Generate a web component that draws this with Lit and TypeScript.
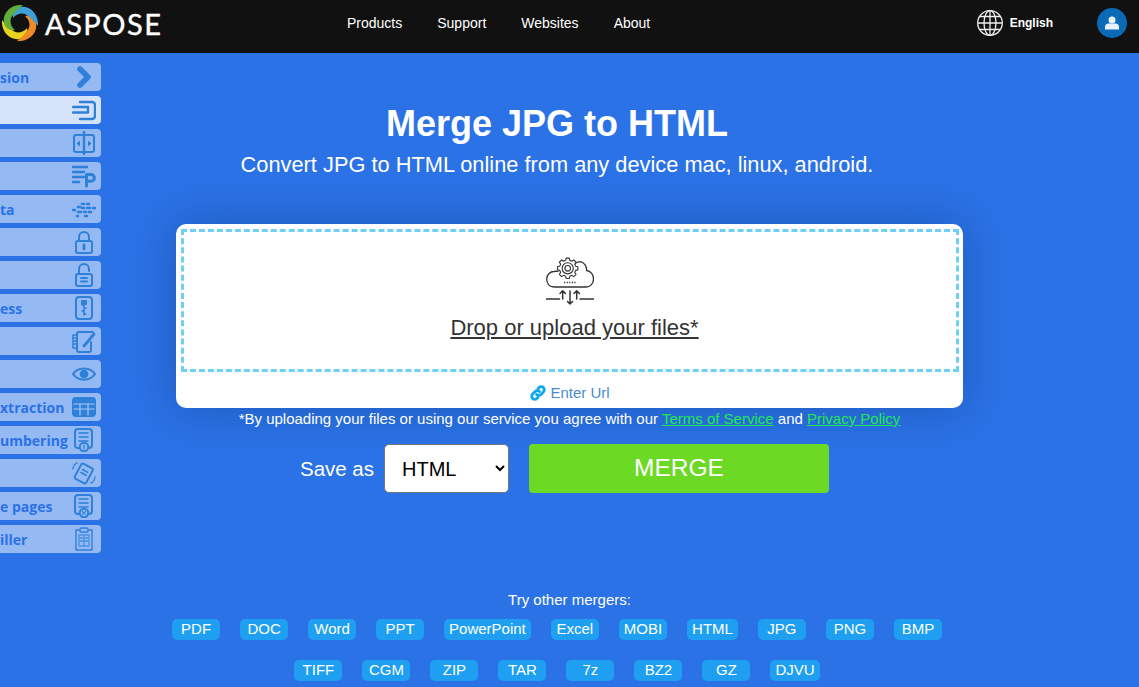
import { LitElement, html, css, svg } from "lit";
import { customElement } from "lit/decorators.js";

const sideItems: [string, any, boolean?][] = [
  ["sion", svg`<path d="M8 4l8 8-8 8" stroke-width="5.500"/>`],
  ["", svg`<path d="M8 4h12a3 3 0 0 1 3 3v11a3 3 0 0 1-3 3H8M1 9h15M1 14.500h15M16 9v5.500" stroke-width="2.400"/>`, true],
  ["", svg`<rect x="2" y="4" width="20" height="17" rx="2"/><path d="M12 1v22" stroke-width="2.400"/><path d="M8 9.500l-3.500 3 3.500 3zM16 9.500l3.500 3-3.500 3z" fill="currentColor" stroke="none"/>`],
  ["", svg`<path d="M1 3h14M1 8h11M1 13h11M1 18h6" stroke-width="2.600"/><path d="M14.500 22V10.500h4.500a3.400 3.400 0 0 1 0 6.800h-4.500" stroke-width="3"/>`],
  ["ta", svg`<path d="M1 13h2M6 10h2M6 15h3M10 7h2M10 11h2M12 15h2M15 7h2M15 11h3M17 15h2M21 11h2M5 19h1M13 19h2" stroke-width="2.600"/>`],
  ["", svg`<rect x="4" y="11" width="16" height="12" rx="2"/><path d="M7 11V7a5 5 0 0 1 10 0v4"/><path d="M12 15v4" stroke-width="2.800"/>`],
  ["", svg`<rect x="4" y="11" width="16" height="12" rx="2"/><path d="M7 11V6a5 5 0 0 1 10 0v2"/><path d="M9 15h6M9 18.500h6"/>`],
  ["ess", svg`<rect x="4" y="1" width="16" height="22" rx="3"/><path d="M12 6v13M10 9h2M12 12h2M10 15h2M12 18h2" stroke-width="1.600"/><rect x="10" y="5" width="4" height="3" fill="currentColor"/>`],
  ["", svg`<path d="M5 6H1v13h4M2 9h2M2 12h2M2 15h2" stroke-width="1.500"/><path d="M19 13v8a2 2 0 0 1-2 2H7a2 2 0 0 1-2-2V5a2 2 0 0 1 2-2h14"/><path d="M12 17l10-12" stroke-width="2.800"/>`],
  ["", svg`<path d="M1 12c5-7.500 17-7.500 22 0-5 7.500-17 7.500-22 0z"/><circle cx="12" cy="12" r="3.400" fill="currentColor"/>`],
  ["xtraction", svg`<rect x="1" y="3" width="22" height="18" rx="3" fill="currentColor"/><path d="M2 9h20M2 14h20M8 9v11M16 9v11" stroke="#a9c5f3" stroke-width="1.200"/>`],
  ["umbering", svg`<path d="M7 20H6a3 3 0 0 1-3-3V4a3 3 0 0 1 3-3h11a3 3 0 0 1 3 3v13a3 3 0 0 1-3 3h-1"/><path d="M7 5h9M7 9h9M7 13h9" stroke-width="1.500"/><circle cx="12" cy="19" r="4.300"/><path d="M12 17v4" stroke-width="1.300"/>`],
  ["", svg`<rect x="5.500" y="4" width="13" height="17" rx="2" transform="rotate(28 12 12)"/><path d="M10.500 8.500l5 2.800M9 11.500l5 2.800" stroke-width="1.600"/><path d="M1 8a7 7 0 0 1 4-6M19 22a7 7 0 0 0 4-6" stroke-width="1.400" stroke-dasharray="2 1.500"/>`],
  ["e pages", svg`<path d="M7 20H6a3 3 0 0 1-3-3V4a3 3 0 0 1 3-3h11a3 3 0 0 1 3 3v13a3 3 0 0 1-3 3h-1"/><path d="M7 5h9M7 9h9M7 13h9" stroke-width="1.500"/><circle cx="12" cy="19" r="4.300"/><path d="M10.300 17.300l3.400 3.400M13.700 17.300l-3.400 3.400" stroke-width="1.200"/>`],
  ["iller", svg`<path d="M7 3H4v20h16V3h-3" stroke-width="1.400"/><rect x="8" y="1" width="8" height="4" rx="1" stroke-width="1.400"/><path d="M7 8h10v11H7zM7 11h10M7 14h10M12 8v11" stroke-width="1.300" opacity=".7"/>`],
];

const row1 = ["PDF", "DOC", "Word", "PPT", "PowerPoint", "Excel", "MOBI", "HTML", "JPG", "PNG", "BMP"];
const row2 = ["TIFF", "CGM", "ZIP", "TAR", "7z", "BZ2", "GZ", "DJVU"];
const arm = "M3-18C-9-19-18-10-16 0-15 5-10 8-5 7-10 3-11-4-7-8-4-12-1-15 3-18Z";

function gearPath(cx: number, cy: number, rOut: number, rIn: number, teeth: number) {
  const pts: string[] = [];
  const step = (Math.PI * 2) / teeth;
  for (let i = 0; i < teeth; i++) {
    const a = i * step;
    [[-0.32, rIn], [-0.2, rOut], [0.2, rOut], [0.32, rIn]].forEach(([f, r]) => {
      const t = a + f * step;
      pts.push(`${(cx + r * Math.cos(t)).toFixed(2)} ${(cy + r * Math.sin(t)).toFixed(2)}`);
    });
  }
  return "M" + pts.join("L") + "Z";
}

@customElement("app-root")
export class AppRoot extends LitElement {
  static styles = css`
    :host { display: block; position: relative; height: 687px; overflow: hidden; background: #2a72e6; font-family: "Liberation Sans", Arial, sans-serif; color: #fff; }
    .header { height: 53px; box-sizing: border-box; padding-bottom: 7px; background: #111; display: flex; align-items: center; position: relative; }
    .logo { display: flex; align-items: center; margin-left: 2px; width: 345px; flex: none; }
    .logo-text { font-family: Lato, sans-serif; font-size: 29px; line-height: 1; margin-left: 7px; letter-spacing: 1.500px; color: #fff; -webkit-text-stroke: 0.4px #fff; }
    .nav { display: flex; gap: 35px; font-size: 14px; flex: 1; }
    .lang { display: flex; align-items: center; gap: 7px; font-size: 12px; font-weight: bold; margin-right: 44px; }
    .avatar { width: 30px; height: 30px; border-radius: 50%; background: #0a6ab5; display: flex; align-items: center; justify-content: center; margin-right: 12px; }
    .side { position: absolute; left: 0; top: 63px; width: 101px; display: flex; flex-direction: column; gap: 5px; }
    .item { height: 28px; border-radius: 0 4px 4px 0; background: rgba(255,255,255,.5); display: flex; align-items: center; justify-content: space-between; padding-right: 5px; color: #2a72e6; font: bold 14px "Open Sans", sans-serif; white-space: nowrap; }
    .item.on { background: rgba(255,255,255,.8); }
    .item svg { width: 24px; height: 24px; flex: none; fill: none; stroke: #2f80d8; stroke-width: 2; color: #2f80d8; stroke-linecap: round; stroke-linejoin: round; }
    .main { display: flex; flex-direction: column; align-items: center; }
    h1 { margin: 49px 25px 0 0; font-size: 36px; line-height: 43px; font-weight: bold; }
    .sub { margin: 7px 25px 0 0; font-size: 21.800px; line-height: 25px; }
    .card { margin-top: 47px; width: 787px; height: 184px; box-sizing: border-box; background: #fff; border-radius: 10px; box-shadow: 0 0 45px rgba(10,30,80,.3); padding: 5px 4px 0 5px; display: flex; flex-direction: column; align-items: stretch; }
    .drop { height: 143px; box-sizing: border-box; border: 3px dashed #6fd0f5; display: flex; flex-direction: column; align-items: center; padding-top: 25px; color: #333; }
    .drop span { font-size: 22px; line-height: 25px; text-decoration: underline; margin: 10px 0 0 9px; }
    .url { display: flex; align-items: center; justify-content: center; gap: 4px; color: #4a8bd0; font-size: 15px; margin-top: 12px; line-height: 17px; }
    .terms { font-size: 15px; line-height: 17px; margin-top: 2px; }
    .terms a { color: #22e84f; text-decoration: underline; }
    .save { display: flex; align-items: center; margin: 17px 10px 0 0; }
    .save label { font-size: 20.500px; margin-right: 10px; }
    select { width: 125px; height: 49px; box-sizing: border-box; font: 20px "Liberation Sans", Arial, sans-serif; padding-left: 13px; border: 1px solid #767676; border-radius: 5px; background: #fff; color: #000; }
    button { width: 300px; height: 49px; margin-left: 20px; border: 0; border-radius: 4px; background: #6cd924; color: #fff; font: 24.500px "Liberation Sans", Arial, sans-serif; padding: 0 0 2px; }
    .try { font-size: 15px; line-height: 17px; margin-top: 98px; }
    .tags { display: flex; justify-content: center; gap: 20px; margin: 0 25px 0 0; }
    .tags.a { margin-top: 11px; }
    .tags.b { margin-top: 20px; }
    .tag { min-width: 48px; height: 21px; box-sizing: border-box; padding: 0 5px; border-radius: 5px; background: #1e9ff2; font-size: 15px; line-height: 20px; text-align: center; }
  `;

  render() {
    return html`
      <div class="header">
        <div class="logo">
          <svg width="36" height="36" viewBox="-18 -18 36 36">
            <path d=${arm} fill="#e8d21f" transform="rotate(270)"/>
            <path d=${arm} fill="#f08a24" transform="rotate(180)"/>
            <path d=${arm} fill="#3f9ed8" transform="rotate(90)"/>
            <path d=${arm} fill="#5fae3c"/>
            <circle r="3.500" fill="#111"/>
          </svg>
          <span class="logo-text">ASPOSE</span>
        </div>
        <div class="nav"><span>Products</span><span>Support</span><span>Websites</span><span>About</span></div>
        <div class="lang">
          <svg width="26" height="26" viewBox="0 0 26 26" fill="none" stroke="#eee" stroke-width="1.300">
            <circle cx="13" cy="13" r="12.300"/><ellipse cx="13" cy="13" rx="6" ry="12.300"/>
            <path d="M13 1v24M1 13h24M3 6.500h20M3 19.500h20"/>
          </svg>
          <span>English</span>
        </div>
        <div class="avatar">
          <svg width="14" height="14" viewBox="0 0 14 14" fill="#e8f1f8"><circle cx="7" cy="4" r="3.500"/><path d="M0 13.500V11c0-2 1.500-3.500 3.500-3.500h7c2 0 3.500 1.500 3.500 3.500v2.500z"/></svg>
        </div>
      </div>

      <div class="side">
        ${sideItems.map(([t, icon, on]) => html`<div class="item ${on ? "on" : ""}"><span>${t}</span><svg viewBox="0 0 24 24">${icon}</svg></div>`)}
      </div>

      <div class="main">
        <h1>Merge JPG to HTML</h1>
        <div class="sub">Convert JPG to HTML online from any device mac, linux, android.</div>
        <div class="card">
          <div class="drop">
            <svg width="48" height="48" viewBox="0 0 48 48" fill="none" stroke="#333" stroke-width="1.300" stroke-linecap="round" stroke-linejoin="round">
              <path d="M12 14.500C10.500 14 9 14.300 8 14.500 4 14.500.7 18 .7 22 .7 26 3 30 9 30H40C44 30 47.500 27 47.500 22 47.500 18 45 14 40.500 13.500 41 9 38 5 34 4.700 32 4.700 30 5.500 29 7"/>
              <path d=${gearPath(21.7, 11.3, 10.3, 8.2, 8)} stroke-width="1.100" fill="#fff"/>
              <circle cx="21.700" cy="11.300" r="5.600" stroke-width="1.100"/><circle cx="21.700" cy="11.300" r="2.800" stroke-width="1.100"/>
              <path d="M18 25.500h12" stroke-width="1.300" stroke-dasharray="1.200 1.400" stroke-linecap="butt"/>
              <path d="M0 42H13.500M16.700 42V34M14 36.500l2.700-2.700 2.700 2.700M24 34V47M21.500 44.500l2.500 2.500 2.500-2.500M30.700 42V34M28 36.500l2.700-2.700 2.700 2.700M34 42H48" stroke-width="1.500"/>
            </svg>
            <span>Drop or upload your files*</span>
          </div>
          <div class="url">
            <svg width="16" height="16" viewBox="0 0 16 16" fill="none" stroke="#0aa8ef" stroke-width="2.800" stroke-linecap="round">
              <path d="M6.500 9.500a3 3 0 0 0 4.300 0l2.600-2.600a3 3 0 0 0-4.300-4.300L8 3.600"/>
              <path d="M9.500 6.500a3 3 0 0 0-4.300 0L2.600 9.100a3 3 0 0 0 4.300 4.300L8 12.400"/>
            </svg>
            Enter Url
          </div>
        </div>
        <div class="terms">*By uploading your files or using our service you agree with our <a>Terms of Service</a> and <a>Privacy Policy</a></div>
        <div class="save">
          <label>Save as</label>
          <select><option>HTML</option></select>
          <button>MERGE</button>
        </div>
        <div class="try">Try other mergers:</div>
        <div class="tags a">${row1.map((t) => html`<div class="tag">${t}</div>`)}</div>
        <div class="tags b">${row2.map((t) => html`<div class="tag">${t}</div>`)}</div>
      </div>
    `;
  }
}
